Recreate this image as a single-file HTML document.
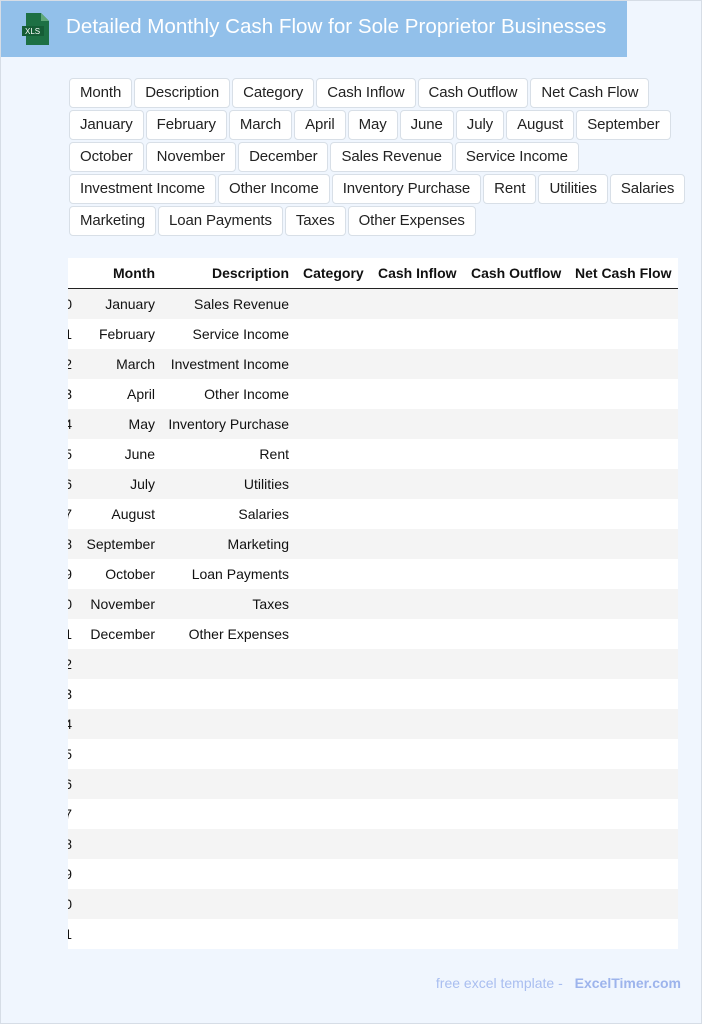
<!DOCTYPE html>
<html><head><meta charset="utf-8"><style>
*{margin:0;padding:0;box-sizing:border-box}
body{width:702px;height:1024px;background:#f0f6fe;font-family:"Liberation Sans",Arial,sans-serif;position:relative;overflow:hidden}
.bd{position:absolute;left:0;top:0;width:702px;height:1024px;border:1px solid #d6dde6;pointer-events:none}
.hdr{position:absolute;left:0;top:0;width:627px;height:57px;background:#92c0ea}
.hdr h1{position:absolute;left:66px;top:15px;font-size:20.6px;font-weight:normal;color:#fff;white-space:nowrap}
.icon{position:absolute;left:22px;top:13px}
.tags{position:absolute;left:69px;top:78px;width:630px}
.tag{display:inline-block;float:left;height:30px;line-height:28px;padding:0 10px;margin:0 2px 2px 0;background:#fff;border:1px solid #d8dfe7;border-radius:4px;font-size:15px;color:#222;letter-spacing:-0.1px}
.row{clear:both}
.tbl{position:absolute;left:68px;top:258px;width:610px;height:691px;overflow:hidden;background:#fff}
.r{position:absolute;left:0;width:610px;height:30px;font-size:14px;color:#111}
.r span{position:absolute;top:7px;white-space:nowrap}
.h span{font-weight:bold;top:7px}
.g{background:#f4f4f4}
.foot{position:absolute;right:21px;top:975px;font-size:14px;color:#a9bef0}
.foot b{margin-left:8px;color:#9db4ec}
</style></head><body>
<div class="hdr">
<svg class="icon" width="28" height="32" viewBox="0 0 28 32"><path d="M4 0h15l8 8v24H4z" fill="#1d7044"/><path d="M19 0v8h8z" fill="#5fa879"/><rect x="0" y="13" width="22" height="10" fill="#155d36"/><text x="3" y="21" font-size="8" fill="#fff" font-family="Liberation Sans">XLS</text></svg>
<h1>Detailed Monthly Cash Flow for Sole Proprietor Businesses</h1>
</div>
<div class="tags">
<div><span class="tag">Month</span><span class="tag">Description</span><span class="tag">Category</span><span class="tag">Cash Inflow</span><span class="tag">Cash Outflow</span><span class="tag">Net Cash Flow</span></div>
<div class="row"><span class="tag">January</span><span class="tag">February</span><span class="tag">March</span><span class="tag">April</span><span class="tag">May</span><span class="tag">June</span><span class="tag">July</span><span class="tag">August</span><span class="tag">September</span></div>
<div class="row"><span class="tag">October</span><span class="tag">November</span><span class="tag">December</span><span class="tag">Sales Revenue</span><span class="tag">Service Income</span></div>
<div class="row"><span class="tag">Investment Income</span><span class="tag">Other Income</span><span class="tag">Inventory Purchase</span><span class="tag">Rent</span><span class="tag">Utilities</span><span class="tag">Salaries</span></div>
<div class="row"><span class="tag">Marketing</span><span class="tag">Loan Payments</span><span class="tag">Taxes</span><span class="tag">Other Expenses</span></div>
</div>
<div class="tbl">
<div class="r h" style="top:0;border-bottom:1px solid #222;height:31px"><span style="right:523px">Month</span><span style="right:389px">Description</span><span style="left:235px">Category</span><span style="left:310px">Cash Inflow</span><span style="left:403px">Cash Outflow</span><span style="left:507px">Net Cash Flow</span></div>
<div id="rows"></div>
</div>
<div class="foot">free excel template - <b>ExcelTimer.com</b></div>
<div class="bd"></div>
<script>
var m=["January","February","March","April","May","June","July","August","September","October","November","December"];
var d=["Sales Revenue","Service Income","Investment Income","Other Income","Inventory Purchase","Rent","Utilities","Salaries","Marketing","Loan Payments","Taxes","Other Expenses"];
var h="";
for(var i=0;i<22;i++){h+='<div class="r'+(i%2==0?' g':'')+'" style="top:'+(31+i*30)+'px"><span style="right:606px">'+i+'</span>'+(i<12?'<span style="right:523px">'+m[i]+'</span><span style="right:389px">'+d[i]+'</span>':'')+'</div>';}
document.getElementById("rows").innerHTML=h;
</script>
</body></html>
